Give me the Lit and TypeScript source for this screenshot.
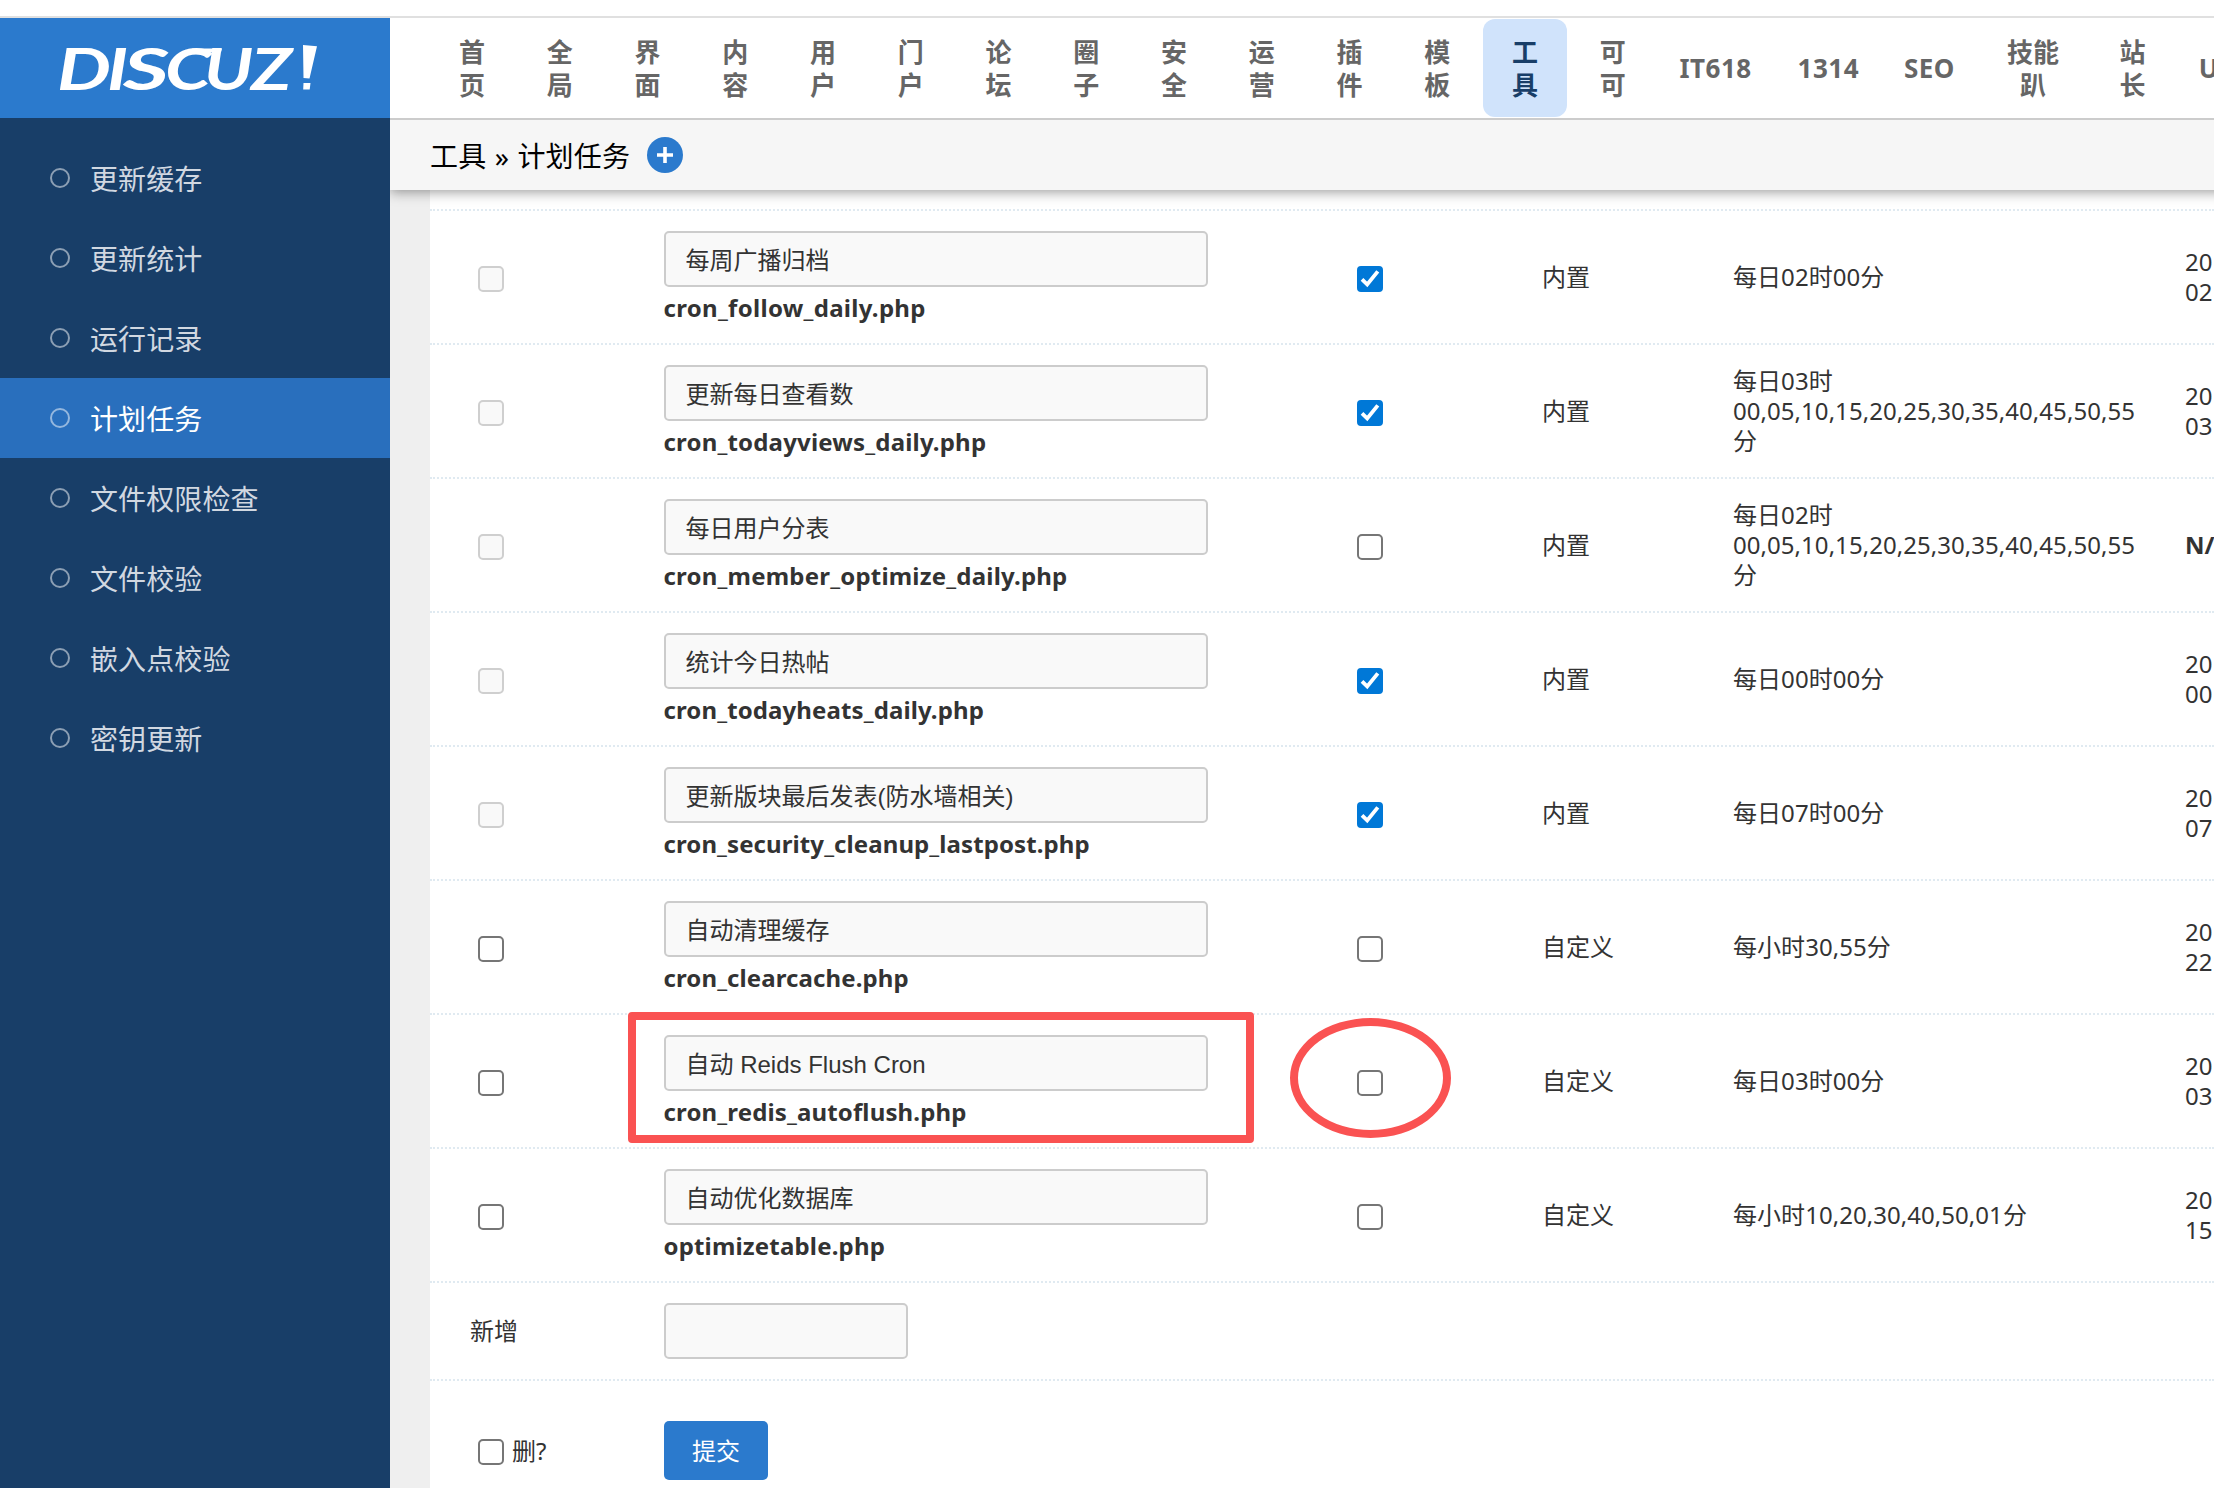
import { LitElement, html, css, svg, nothing } from "lit";
import { customElement } from "lit/decorators.js";

interface Job {
  title: string;
  file: string;
  track: number;
  custom?: boolean;
  on?: boolean;
  when: string[];
  last: string[];
}

const NAV: { label: string[]; w: number }[] = [
  ...["首页", "全局", "界面", "内容", "用户", "门户", "论坛", "圈子", "安全", "运营", "插件", "模板", "工具", "可可"].map(
    (s) => ({ label: [s[0], s[1]], w: 87.77 })
  ),
  { label: ["IT618"], w: 117.6 },
  { label: ["1314"], w: 108 },
  { label: ["SEO"], w: 94.2 },
  { label: ["技能", "趴"], w: 112.8 },
  { label: ["站", "长"], w: 86.4 },
];

const SIDE = ["更新缓存", "更新统计", "运行记录", "计划任务", "文件权限检查", "文件校验", "嵌入点校验", "密钥更新"];

const MINUTES = "00,05,10,15,20,25,30,35,40,45,50,55";

const JOBS: Job[] = [
  { title: "每周广播归档", file: "cron_follow_daily.php", track: 0.3, on: true, when: ["每日02时00分"], last: ["20", "02"] },
  { title: "更新每日查看数", file: "cron_todayviews_daily.php", track: 0.18, on: true, when: ["每日03时", MINUTES, "分"], last: ["20", "03"] },
  { title: "每日用户分表", file: "cron_member_optimize_daily.php", track: 0.2, when: ["每日02时", MINUTES, "分"], last: ["N/A"] },
  { title: "统计今日热帖", file: "cron_todayheats_daily.php", track: 0.11, on: true, when: ["每日00时00分"], last: ["20", "00"] },
  { title: "更新版块最后发表(防水墙相关)", file: "cron_security_cleanup_lastpost.php", track: 0.09, on: true, when: ["每日07时00分"], last: ["20", "07"] },
  { title: "自动清理缓存", file: "cron_clearcache.php", track: 0.1, custom: true, when: ["每小时30,55分"], last: ["20", "22"] },
  { title: "自动 Reids Flush Cron", file: "cron_redis_autoflush.php", track: 0.14, custom: true, when: ["每日03时00分"], last: ["20", "03"] },
  { title: "自动优化数据库", file: "optimizetable.php", track: 0.17, custom: true, when: ["每小时10,20,30,40,50,01分"], last: ["20", "15"] },
];

const lines = (parts: string[]) => parts.map((p) => html`<div>${p}</div>`);

@customElement("check-box")
class CheckBox extends LitElement {
  static properties = { checked: { type: Boolean }, disabled: { type: Boolean } };
  declare checked: boolean;
  declare disabled: boolean;
  static styles = css`
    :host { display: block; width: 26px; height: 26px; flex: none; }
    .box { box-sizing: border-box; width: 26px; height: 26px; border: 2px solid #767676; border-radius: 5px; background: #fff; }
    .off { border-color: #cfcfcf; background: #f9f9f9; }
    .on { border-color: #0078d7; background: #0078d7; border-radius: 4px; }
    svg { display: block; width: 22px; height: 22px; }
  `;
  render() {
    const cls = this.checked ? "box on" : this.disabled ? "box off" : "box";
    return html`<div class=${cls}>
      ${this.checked
        ? html`<svg viewBox="0 0 22 22">${svg`<path d="M3 11.4 8.2 16.4 18.8 3.4" fill="none" stroke="#fff" stroke-width="3.8"/>`}</svg>`
        : nothing}
    </div>`;
  }
}

@customElement("app-root")
class AppRoot extends LitElement {
  static styles = css`
    :host {
      display: flex; flex-direction: column; box-sizing: border-box; width: 2214px; height: 1488px;
      padding-top: 16px; overflow: hidden; background: #fff; color: #333;
      font: 24px/30px "Noto Sans", "Noto Sans CJK SC", sans-serif;
    }
    * { box-sizing: border-box; }
    .shell { display: flex; flex: 1; min-height: 0; border-top: 2px solid #e0e0e0; }
    .side { width: 390px; flex: none; background: #183e68; }
    .brand { height: 100px; background: #2b7acd; }
    .brand svg { display: block; width: 390px; height: 100px; }
    .menu { padding-top: 20px; }
    .entry { display: flex; align-items: center; height: 80px; padding-left: 50px; gap: 20px; font-size: 28px; color: #d1d8e1; }
    .entry span { padding-top: 2px; letter-spacing: .1px; }
    .entry.active { background: #296fbd; color: #fff; }
    .entry i { width: 20px; height: 20px; border: 2px solid rgba(255, 255, 255, .5); border-radius: 50%; }
    .main { flex: 1; min-width: 0; display: flex; flex-direction: column; overflow: hidden; }
    .nav { display: flex; flex: none; height: 102px; padding-left: 38px; border-bottom: 2px solid #ccc; font-size: 26px; line-height: 33px; font-weight: 700; color: #666; }
    .slot { flex: none; display: flex; padding: 1px 2px; }
    .slot div.pill { flex: 1; display: flex; flex-direction: column; align-items: center; justify-content: center; border-radius: 12px; }
    .slot .stacked { padding-top: 1px; }
    .slot .latin { letter-spacing: .5px; }
    .slot .current { background: #d0e3fb; color: #183e68; }
    .tail { flex: none; align-self: center; padding-left: 23px; }
    .crumb { display: flex; flex: none; align-items: center; height: 70px; margin-right: -24px; padding-left: 40px; background: #f6f6f6; box-shadow: 0 2px 12px rgba(0, 0, 0, .4); clip-path: inset(0 0 -20px 0); color: #000; font-size: 28px; z-index: 1; }
    .crumb span { white-space: pre; padding-top: 2px; letter-spacing: .2px; word-spacing: .8px; }
    .crumb svg { width: 36px; height: 36px; margin: 0 0 0 17px; }
    .body { flex: 1; min-height: 0; padding-left: 40px; background: #efefef; }
    .sheet { height: 100%; padding-top: 19px; background: #fff; }
    .row { display: grid; grid-template-columns: 194px 685px 193px 191px 452px 109px; height: 134px; border-top: 2px dotted #e0eaf1; }
    .cell { display: flex; flex-direction: column; justify-content: center; padding-left: 40px; white-space: nowrap; }
    .cell.tick { padding: 4px 0 0 48px; }
    .cell.strong { font-weight: 700; }
    .cell.when { letter-spacing: .05px; }
    .job { justify-content: flex-start; padding-top: 20px; position: relative; }
    .field { width: 544px; height: 56px; flex: none; padding: 0 20px 2px 19.5px; border: 2px solid #ccc; border-radius: 5px; background: #f9f9f9; color: #333; font: 24px "Liberation Sans", "Noto Sans CJK SC", sans-serif; outline: none; }
    .field.short { width: 244px; }
    .file { margin: 6px 0 0 -.5px; font-weight: 700; color: #333; }
    .row.add { height: 98px; }
    .row.foot { height: 140px; }
    .foot .del { flex-direction: row; justify-content: flex-start; align-items: flex-start; padding: 58px 0 0 48px; gap: 8px; }
    .foot .del span { margin-top: -3px; }
    .foot .go { justify-content: flex-start; padding-top: 40px; }
    .submit { width: 104px; height: 59px; border: 0; border-radius: 5px; padding: 0; background: #2b7acd; color: #fff; font: inherit; }
    .mark-box { position: absolute; left: 4px; top: -3px; width: 626px; height: 131px; border: 8px solid #fa5252; border-radius: 4px; }
    .tick { position: relative; }
    .mark-ring { position: absolute; left: -19px; top: 3px; width: 161px; height: 120px; border: 8px solid #fa5252; border-radius: 50%; }
  `;

  renderJob(j: Job, marked: boolean) {
    return html`<div class="row">
      <div class="cell tick"><check-box ?disabled=${!j.custom}></check-box></div>
      <div class="cell job">
        <input class="field" .value=${j.title} />
        <div class="file" style="letter-spacing:${j.track}px">${j.file}</div>
        ${marked ? html`<div class="mark-box"></div>` : nothing}
      </div>
      <div class="cell tick"><check-box ?checked=${!!j.on}></check-box>${marked ? html`<div class="mark-ring"></div>` : nothing}</div>
      <div class="cell">${j.custom ? "自定义" : "内置"}</div>
      <div class="cell when">${lines(j.when)}</div>
      <div class="cell ${j.last.length === 1 ? "strong" : ""}">${lines(j.last)}</div>
    </div>`;
  }

  render() {
    return html`<div class="shell">
      <div class="side">
        <div class="brand">
          <svg viewBox="0 0 390 100" fill="#fff" font-family="Lato" font-weight="700" font-style="italic">
            <text y="72" font-size="57"><tspan x="57" textLength="54" lengthAdjust="spacingAndGlyphs">D</tspan><tspan x="107" textLength="21" lengthAdjust="spacingAndGlyphs">I</tspan><tspan x="123" textLength="46" lengthAdjust="spacingAndGlyphs">S</tspan><tspan x="165" textLength="46" lengthAdjust="spacingAndGlyphs">C</tspan><tspan x="204" textLength="49" lengthAdjust="spacingAndGlyphs">U</tspan><tspan x="251" textLength="41" lengthAdjust="spacingAndGlyphs">Z</tspan></text>
            <path d="M192 30.6h30l-1 3.6h-26z" />
            <path d="M303 27l14 1.2-7.500 32.300-6-.5zM303.500 65h7l-.8 6.500h-6.500z" />
          </svg>
        </div>
        <div class="menu">
          ${SIDE.map((s) => html`<div class="entry ${s === "计划任务" ? "active" : ""}"><i></i><span>${s}</span></div>`)}
        </div>
      </div>
      <div class="main">
        <div class="nav">
          ${NAV.map(
            (n) => html`<div class="slot" style="width:${n.w}px"><div class="pill ${n.label.length > 1 ? "stacked" : "latin"} ${n.label.join("") === "工具" ? "current" : ""}">${lines(n.label)}</div></div>`
          )}
          <div class="tail">U</div>
        </div>
        <div class="crumb">
          <span>工具 » 计划任务</span>
          <svg viewBox="0 0 36 36"><circle cx="18" cy="18" r="18" fill="#2b7acd" /><path d="M18 10v16M10 18h16" stroke="#fff" stroke-width="3.6" /></svg>
        </div>
        <div class="body">
          <div class="sheet">
            ${JOBS.map((j) => this.renderJob(j, j.file === "cron_redis_autoflush.php"))}
            <div class="row add">
              <div class="cell">新增</div>
              <div class="cell"><input class="field short" /></div>
            </div>
            <div class="row foot">
              <div class="cell del"><check-box></check-box><span>删?</span></div>
              <div class="cell go"><button class="submit">提交</button></div>
            </div>
          </div>
        </div>
      </div>
    </div>`;
  }
}
